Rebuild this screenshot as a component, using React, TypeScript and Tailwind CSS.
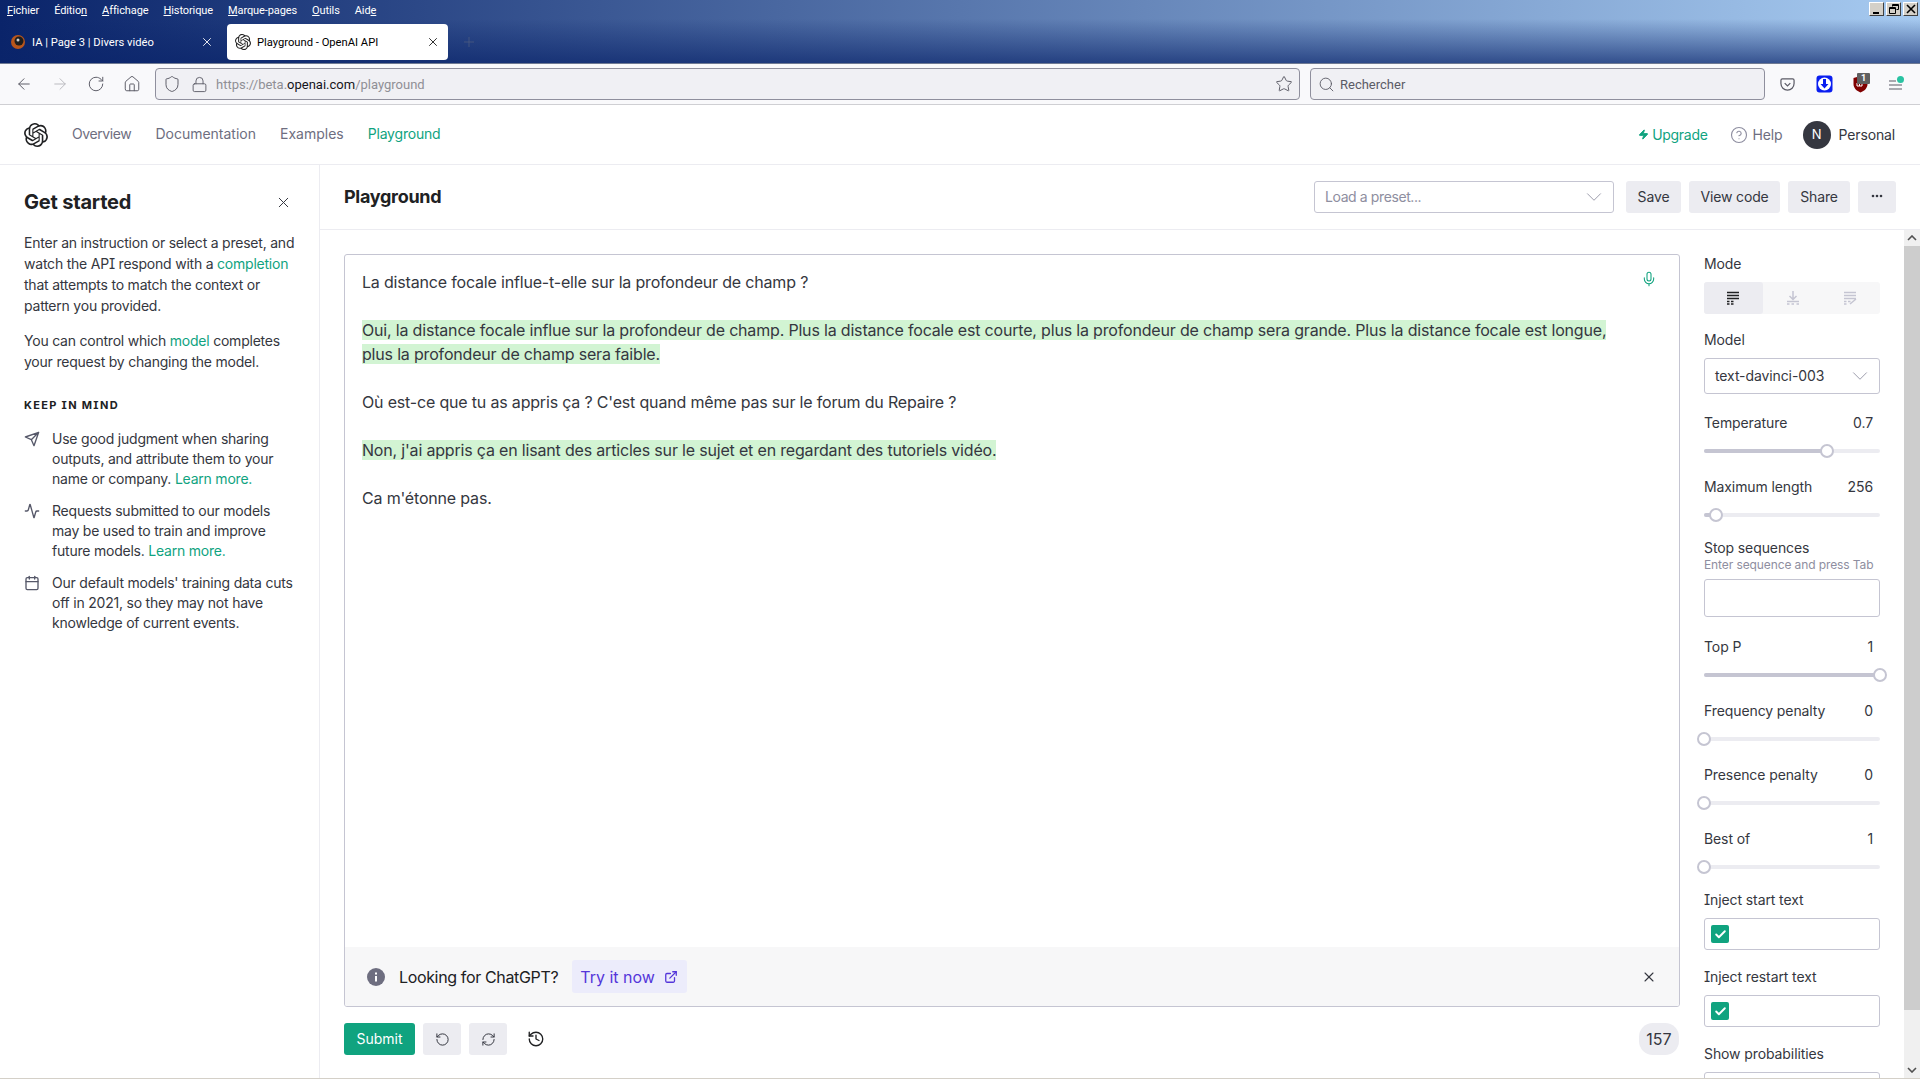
import {
  ArrowLeft,
  ArrowRight,
  Calendar,
  Check,
  ChevronDown,
  CircleHelp,
  ExternalLink,
  History,
  House,
  Lock,
  Mic,
  Plus,
  RefreshCw,
  RotateCcw,
  RotateCw,
  Search,
  Shield,
  Star,
  X,
  Zap,
  Activity,
} from "lucide-react";
import { SiOpenai } from "react-icons/si";

const menu: [string, string, string][] = [
  ["", "F", "ichier"],
  ["Éditio", "n", ""],
  ["", "A", "ffichage"],
  ["", "H", "istorique"],
  ["", "M", "arque-pages"],
  ["", "O", "utils"],
  ["Aid", "e", ""],
];

function WinButton({ children }: { children: React.ReactNode }) {
  return (
    <div className="flex h-[14px] w-[15px] items-center justify-center border border-t-white border-l-white border-r-[#404040] border-b-[#404040] bg-[#d4d0c8]">
      {children}
    </div>
  );
}

function BrowserChrome() {
  return (
    <>
      <div className="flex h-[64px] shrink-0 flex-col border-b border-[#6f7a93] bg-[linear-gradient(to_bottom,transparent_30%,#0a246ab0_100%),linear-gradient(to_right,#0a246a,#a6caf0)] font-[Roboto,sans-serif]">
        <div className="flex h-[24px] shrink-0 items-start justify-between">
          <div className="flex gap-[15px] pl-[7px] pt-[3px] text-[11px] leading-[15px] tracking-[-0.1px] text-white">
            {menu.map(([a, b, c]) => (
              <span key={a + b + c}>
                {a}
                <span className="underline">{b}</span>
                {c}
              </span>
            ))}
          </div>
          <div className="flex gap-[2px] pr-[2px] pt-[2px]">
            <WinButton>
              <div className="mt-[7px] mr-[2px] h-[2px] w-[6px] bg-black" />
            </WinButton>
            <WinButton>
              <svg width="10" height="10" viewBox="0 0 10 10" fill="none" stroke="black">
                <path d="M3.500 2.500V.5h6v5h-2M.5 3.500h6v6h-6zM.5 4.500h6M3.500 1.500h6" />
              </svg>
            </WinButton>
            <WinButton>
              <svg width="10" height="10" viewBox="0 0 10 10" fill="none" stroke="black" strokeWidth="1.6">
                <path d="M1 1l8 8M9 1l-8 8" />
              </svg>
            </WinButton>
          </div>
        </div>
        <div className="flex h-[36px] items-center text-[11.2px] text-white">
          <div className="flex h-[36px] w-[227px] items-center pl-[10px]">
            <svg width="16" height="16" viewBox="0 0 16 16">
              <circle cx="8" cy="8" r="7" fill="#b9561c" />
              <circle cx="9" cy="7" r="4.500" fill="#1d1d1d" />
              <circle cx="8" cy="6" r="1.500" fill="#cfcfcf" />
            </svg>
            <span className="ml-[6px] mt-[2px] w-[169px] truncate">IA | Page 3 | Divers vidéo</span>
            <X size={14} strokeWidth={1.5} className="-ml-[1px] text-white" />
          </div>
          <div className="flex h-[36px] w-[221px] items-center rounded-[4px] bg-white pl-[8px] text-black">
            <SiOpenai size={16} className="text-[#222]" />
            <span className="ml-[6px] mt-[2px] w-[169px]">Playground - OpenAI API</span>
            <X size={14} strokeWidth={1.6} className="text-[#222]" />
          </div>
          <Plus size={16} strokeWidth={1.2} className="ml-[13px] text-[#4c5a82]" />
        </div>
      </div>
      <div className="flex h-[41px] shrink-0 items-center border-b border-[#cfcfd3] bg-[#f9f9fb] font-[Roboto,sans-serif] text-[#5b5b66]">
        <div className="flex w-[155px] items-center gap-[18px] pl-[15px]">
          <ArrowLeft size={18} strokeWidth={1.3} />
          <ArrowRight size={18} strokeWidth={1.3} className="text-[#b9b9be]" />
          <RotateCw size={18} strokeWidth={1.3} />
          <House size={18} strokeWidth={1.3} />
        </div>
        <div className="flex h-[32px] w-[1145px] items-center rounded-[4px] border border-[#8f8f9d] bg-[#f0f0f4] pl-[7px] text-[13px]">
          <Shield size={18} strokeWidth={1.3} />
          <Lock size={17} strokeWidth={1.3} className="ml-[10px]" />
          <span className="ml-[8px] mt-[1px] text-[#8f8f96]">
            https://beta.<span className="text-[#15141a]">openai.com</span>/playground
          </span>
          <Star size={18} strokeWidth={1.3} className="ml-auto mr-[6px]" />
        </div>
        <div className="ml-[10px] flex h-[32px] w-[455px] items-center rounded-[4px] border border-[#8f8f9d] bg-[#f0f0f4] pl-[7px] text-[13px]">
          <Search size={17} strokeWidth={1.3} />
          <span className="ml-[5px] mt-[1px]">Rechercher</span>
        </div>
        <div className="relative flex flex-1 items-center pl-[15px]">
          <svg width="15" height="15" viewBox="0 0 16 16" fill="none" stroke="#5b5b66" strokeWidth="1.3">
            <path d="M2.500 2h11a1.500 1.500 0 0 1 1.500 1.500V7a7 7 0 0 1-14 0V3.500A1.500 1.500 0 0 1 2.500 2z" />
            <path d="M5 6.500l3 3 3-3" />
          </svg>
          <svg width="17" height="18" viewBox="0 0 17 18" className="ml-[21px]">
            <rect x="0.500" y="0.500" width="16" height="17" rx="3" fill="#0a1ef0" />
            <circle cx="8.500" cy="9" r="6.500" fill="white" />
            <path d="M7 4h3v5h2.500l-4 4.500-4-4.500H7z" fill="#0a1ef0" />
          </svg>
          <svg width="15" height="18" viewBox="0 0 15 18" className="ml-[20px]">
            <path d="M0.500 3L7.500 1l7 2v6c0 4-3 7-7 8.500C3.500 16 .5 13 .5 9z" fill="#800000" />
            <path d="M4 8v3h2.500V8M6.500 11h2.500V8" fill="none" stroke="#fff" strokeWidth="1" />
          </svg>
          <span className="absolute left-[92px] -top-[2px] flex h-[11px] w-[13px] items-center justify-center rounded-[1px] bg-[#5f5f5f] text-[9px] font-bold text-white">
            1
          </span>
          <svg width="13" height="10" viewBox="0 0 13 10" fill="none" stroke="#5b5b66" strokeWidth="1.1" className="ml-[21px] mt-[2px]">
            <path d="M0 1h7M0 5h13M0 9h13" />
          </svg>
          <span className="absolute left-[132px] top-[1px] h-[7px] w-[7px] rounded-full bg-[#2ac3a2]" />
        </div>
      </div>
    </>
  );
}

function TopNav() {
  return (
    <div className="flex h-[60px] shrink-0 items-center border-b border-[#ececf1] pl-[24px] pr-[25px] text-[14px] tracking-[-0.14px] text-[#6e6e80]">
      <SiOpenai size={24} className="text-[#202123]" />
      <nav className="mb-[2px] ml-[24px] flex gap-[24px]">
        <span className="tracking-[-0.4px]">Overview</span>
        <span className="tracking-[0px]">Documentation</span>
        <span className="tracking-[0px]">Examples</span>
        <span className="tracking-[-0.2px] text-[#10a37f]">Playground</span>
      </nav>
      <div className="ml-auto flex items-center">
        <Zap size={11} fill="#10a37f" className="text-[#10a37f]" />
        <span className="ml-[3px] tracking-[-0.3px] text-[#10a37f]">Upgrade</span>
        <CircleHelp size={18} strokeWidth={1.5} className="ml-[22px] text-[#8e8ea0]" />
        <span className="ml-[5px]">Help</span>
        <div className="ml-[20px] flex h-[28px] w-[28px] items-center justify-center rounded-full bg-[#353740] text-[13px] text-white">
          N
        </div>
        <span className="ml-[8px] text-[#353740]">Personal</span>
      </div>
    </div>
  );
}

function MindItem({ icon, children }: { icon: React.ReactNode; children: React.ReactNode }) {
  return (
    <div className="flex gap-[12px]">
      <div className="mt-[2px] w-[16px] shrink-0 text-[#565869]">{icon}</div>
      <p>{children}</p>
    </div>
  );
}

function Sidebar() {
  return (
    <aside className="w-[320px] shrink-0 border-r border-[#ececf1] pl-[24px] pr-[22px] pt-[24px] text-[14px] tracking-[-0.22px] text-[#353740]">
      <div className="flex h-[26px] items-center justify-between pr-[5px]">
        <h2 className="text-[20px] font-bold tracking-[-0.2px] text-[#202123]">Get started</h2>
        <X size={17} strokeWidth={1.4} />
      </div>
      <p className="mt-[17px] leading-[21px]">
        Enter an instruction or select a preset, and watch the API respond with a{" "}
        <span className="text-[#10a37f]">completion</span> that attempts to match the context or pattern you provided.
      </p>
      <p className="mt-[14px] leading-[21px]">
        You can control which <span className="text-[#10a37f]">model</span> completes your request by changing the model.
      </p>
      <h3 className="mt-[25px] text-[11px] font-bold tracking-[0.12em] text-[#202123]">KEEP IN MIND</h3>
      <div className="mt-[15px] flex flex-col gap-[12px] leading-[20px]">
        <MindItem
          icon={
            <svg width="16" height="16" viewBox="0 0 24 24" fill="none" stroke="currentColor" strokeWidth="2" strokeLinejoin="round">
              <path d="M22 2L11 13M22 2l-7 20-4-9-9-4z" />
            </svg>
          }
        >
          Use good judgment when sharing outputs, and attribute them to your name or company.{" "}
          <span className="text-[#10a37f]">Learn more.</span>
        </MindItem>
        <MindItem icon={<Activity size={16} strokeWidth={2} />}>
          Requests submitted to our models may be used to train and improve future models.{" "}
          <span className="text-[#10a37f]">Learn more.</span>
        </MindItem>
        <MindItem icon={<Calendar size={16} strokeWidth={2} />}>
          Our default models' training data cuts off in 2021, so they may not have knowledge of current events.
        </MindItem>
      </div>
    </aside>
  );
}

function Slider({ pct }: { pct: number }) {
  return (
    <div className="relative mt-[14px] h-[4px] rounded-full bg-[#ececf1]">
      <div className="h-[4px] rounded-full bg-[#c5c5d2]" style={{ width: `${pct}%` }} />
      <div
        className="absolute -top-[5px] -ml-[7px] h-[14px] w-[14px] rounded-full border-2 border-[#c5c5d2] bg-white"
        style={{ left: `${pct}%` }}
      />
    </div>
  );
}

function SliderRow({ label, value, pct }: { label: string; value: string; pct: number }) {
  return (
    <div className="mt-[22px] first:mt-0">
      <div className="flex h-[24px] items-center justify-between pr-[7px]">
        <span>{label}</span>
        <span>{value}</span>
      </div>
      <Slider pct={pct} />
    </div>
  );
}

function CheckRow({ label }: { label: string }) {
  return (
    <div className="mt-[18px] first:mt-[22px]">
      <div className="h-[18px] leading-[18px]">{label}</div>
      <div className="mt-[9px] flex h-[32px] items-center rounded-[3px] border border-[#c5c5d2] pl-[6px]">
        <div className="flex h-[18px] w-[18px] items-center justify-center rounded-[2px] bg-[#10a37f]">
          <Check size={13} strokeWidth={3.5} className="text-white" />
        </div>
      </div>
    </div>
  );
}

function RightPanel() {
  return (
    <div className="-mr-[10px] w-[196px] shrink-0 overflow-hidden px-[10px] pt-[24px] text-[14px] leading-[20px] tracking-[-0.1px] text-[#353740]">
      <div className="h-[20px]">Mode</div>
      <div className="mt-[8px] flex h-[32px] rounded-[3px] bg-[#f7f7f8] text-[#8e8ea0]">
        <div className="flex w-[59px] items-center justify-center rounded-[3px] bg-[#ececf1] pr-[2px] text-[#202123]">
          <svg width="14" height="14" viewBox="0 0 14 14" fill="none" stroke="currentColor" strokeWidth="1.500">
            <path d="M1 1.500h12M1 4.500h12M1 7.500h12M1 10.500h2.500M5 10.500h2.500M1 13h2.500M5 13h2.500" />
          </svg>
        </div>
        <div className="flex w-[59px] items-center justify-center text-[#c5c5d2]">
          <svg width="14" height="14" viewBox="0 0 14 14" fill="none" stroke="currentColor" strokeWidth="1.500">
            <path d="M7 0v8M3.500 5L7 8.500 10.500 5M1 10.500h12M1 13h2.500M5.500 13H8M10.500 13H13" />
          </svg>
        </div>
        <div className="flex w-[58px] items-center justify-center text-[#c5c5d2]">
          <svg width="14" height="14" viewBox="0 0 14 14" fill="none" stroke="currentColor" strokeWidth="1.500">
            <path d="M0 1.500h12M0 4.500h12M0 7.500h12M0 10.500h2.500M4 10.500h2.500M0 13h2.500M6 13l6-5" />
          </svg>
        </div>
      </div>
      <div className="mt-[16px] h-[20px]">Model</div>
      <div className="mt-[8px] flex h-[36px] items-center justify-between rounded-[3px] border border-[#c5c5d2] pl-[10px] pr-[6px]">
        <span>text-davinci-003</span>
        <ChevronDown size={26} strokeWidth={0.8} className="text-[#8e8ea0]" />
      </div>
      <div className="mt-[17px]">
        <SliderRow label="Temperature" value="0.7" pct={70} />
        <SliderRow label="Maximum length" value="256" pct={7} />
      </div>
      <div className="mt-[21px] h-[20px]">Stop sequences</div>
      <div className="h-[14px] text-[12px] leading-[14px] text-[#8e8ea0]">Enter sequence and press Tab</div>
      <div className="mt-[7px] h-[38px] rounded-[3px] border border-[#c5c5d2]" />
      <div className="mt-[18px]">
        <SliderRow label="Top P" value="1" pct={100} />
        <SliderRow label="Frequency penalty" value="0" pct={0} />
        <SliderRow label="Presence penalty" value="0" pct={0} />
        <SliderRow label="Best of" value="1" pct={0} />
      </div>
      <div>
        <CheckRow label="Inject start text" />
        <CheckRow label="Inject restart text" />
      </div>
      <div className="mt-[18px] h-[18px] leading-[18px]">Show probabilities</div>
      <div className="mt-[9px] h-[32px] rounded-[3px] border border-[#c5c5d2]" />
    </div>
  );
}

function Scrollbar() {
  return (
    <div className="flex w-[16px] shrink-0 flex-col bg-[#f0f0f0] text-[#505050]">
      <div className="flex h-[16px] items-center justify-center">
        <svg width="10" height="6" viewBox="0 0 10 6" fill="none" stroke="currentColor" strokeWidth="1.6">
          <path d="M1 5l4-4 4 4" />
        </svg>
      </div>
      <div className="h-[764px] bg-[#cdcdcd]" />
      <div className="mt-auto flex h-[16px] items-center justify-center">
        <svg width="10" height="6" viewBox="0 0 10 6" fill="none" stroke="currentColor" strokeWidth="1.6">
          <path d="M1 1l4 4 4-4" />
        </svg>
      </div>
    </div>
  );
}

function Editor() {
  return (
    <div className="flex min-w-0 flex-1 flex-col pl-[24px] pt-[24px]">
      <div className="flex h-[753px] flex-col overflow-hidden rounded-[3px] border border-[#c5c5d2]">
        <div className="relative flex-1 pl-[17px] pr-[14px] pt-[15px] text-[16px] leading-[24px] tracking-[-0.18px] text-[#353740]">
          <Mic size={16} strokeWidth={1.6} className="absolute right-[22px] top-[16px] text-[#10a37f]" />
          <p>La distance focale influe-t-elle sur la profondeur de champ ?</p>
          <p className="mt-[24px]">
            <span className="bg-[#d2f4d3]">
              Oui, la distance focale influe sur la profondeur de champ. Plus la distance focale est courte, plus la profondeur de champ sera grande. Plus la distance focale est longue,
              <br />
              plus la profondeur de champ sera faible.
            </span>
          </p>
          <p className="mt-[24px]">Où est-ce que tu as appris ça ? C'est quand même pas sur le forum du Repaire ?</p>
          <p className="mt-[24px]">
            <span className="bg-[#d2f4d3]">Non, j'ai appris ça en lisant des articles sur le sujet et en regardant des tutoriels vidéo.</span>
          </p>
          <p className="mt-[24px]">Ca m'étonne pas.</p>
        </div>
        <div className="flex h-[59px] shrink-0 items-center bg-[#f7f7f8] pl-[22px] pr-[22px] text-[16px] text-[#202123]">
          <svg width="18" height="18" viewBox="0 0 18 18">
            <circle cx="9" cy="9" r="9" fill="#6e6e80" />
            <rect x="8" y="8" width="2" height="5.500" fill="white" />
            <rect x="8" y="4.500" width="2" height="2" fill="white" />
          </svg>
          <span className="ml-[14px] tracking-[-0.35px]">Looking for ChatGPT?</span>
          <div className="ml-[14px] flex h-[33px] items-center rounded-[3px] bg-[#ececfb] pl-[8px] pr-[9px] text-[#5436da]">
            <span>Try it now</span>
            <ExternalLink size={14} strokeWidth={2.2} className="ml-[9px]" />
          </div>
          <X size={16} strokeWidth={1.6} className="ml-auto text-[#353740]" />
        </div>
      </div>
      <div className="mt-[16px] flex h-[32px] items-center text-[14px]">
        <button className="flex h-[32px] w-[71px] items-center justify-center rounded-[3px] bg-[#10a37f] pb-[1px] text-white">Submit</button>
        <button className="ml-[8px] flex h-[32px] w-[38px] items-center justify-center rounded-[3px] bg-[#ececf1] text-[#353740]">
          <RotateCcw size={15} strokeWidth={1.6} />
        </button>
        <button className="ml-[8px] flex h-[32px] w-[38px] items-center justify-center rounded-[3px] bg-[#ececf1] text-[#353740]">
          <RefreshCw size={15} strokeWidth={1.6} />
        </button>
        <History size={18} strokeWidth={1.8} className="ml-[20px] text-[#202123]" />
        <div className="ml-auto mr-[1px] flex h-[32px] w-[40px] items-center justify-center rounded-[14px] bg-[#ececf1] text-[16px] text-[#353740]">
          157
        </div>
      </div>
    </div>
  );
}

function HeaderButton({ children, className }: { children: React.ReactNode; className: string }) {
  return <div className={`flex h-[32px] items-center justify-center rounded-[3px] bg-[#ececf1] pb-[2px] tracking-[-0.14px] ${className}`}>{children}</div>;
}

function Playground() {
  return (
    <main className="flex min-w-0 flex-1 flex-col">
      <div className="flex h-[65px] shrink-0 items-center border-b border-[#ececf1] pl-[24px] pr-[24px] text-[14px] text-[#353740]">
        <h1 className="pb-[2px] text-[18px] font-bold tracking-[-0.3px] text-[#202123]">Playground</h1>
        <div className="ml-auto flex h-[32px] w-[300px] items-center justify-between rounded-[3px] border border-[#c5c5d2] pl-[10px] pr-[6px] tracking-[-0.4px] text-[#8e8ea0]">
          <span className="pb-[1px]">Load a preset...</span>
          <ChevronDown size={26} strokeWidth={0.8} />
        </div>
        <HeaderButton className="ml-[12px] w-[55px]">Save</HeaderButton>
        <HeaderButton className="ml-[8px] w-[91px]">View code</HeaderButton>
        <HeaderButton className="ml-[8px] w-[62px]">Share</HeaderButton>
        <HeaderButton className="ml-[8px] w-[38px]">
          <svg width="12" height="4" viewBox="0 0 12 4" fill="#353740">
            <circle cx="2" cy="2" r="1.300" />
            <circle cx="6" cy="2" r="1.300" />
            <circle cx="10" cy="2" r="1.300" />
          </svg>
        </HeaderButton>
      </div>
      <div className="flex min-h-0 flex-1">
        <Editor />
        <div className="ml-[14px]">
          <RightPanel />
        </div>
        <div className="w-[24px] shrink-0" />
        <Scrollbar />
      </div>
    </main>
  );
}

export default function App() {
  return (
    <div className="flex h-[1080px] w-[1920px] flex-col overflow-hidden bg-white font-[Inter,sans-serif] [font-feature-settings:'cv08']">
      <BrowserChrome />
      <TopNav />
      <div className="flex min-h-0 flex-1">
        <Sidebar />
        <Playground />
      </div>
      <div className="h-[2px] shrink-0 border-t border-[#d4d0c8] bg-white" />
    </div>
  );
}
